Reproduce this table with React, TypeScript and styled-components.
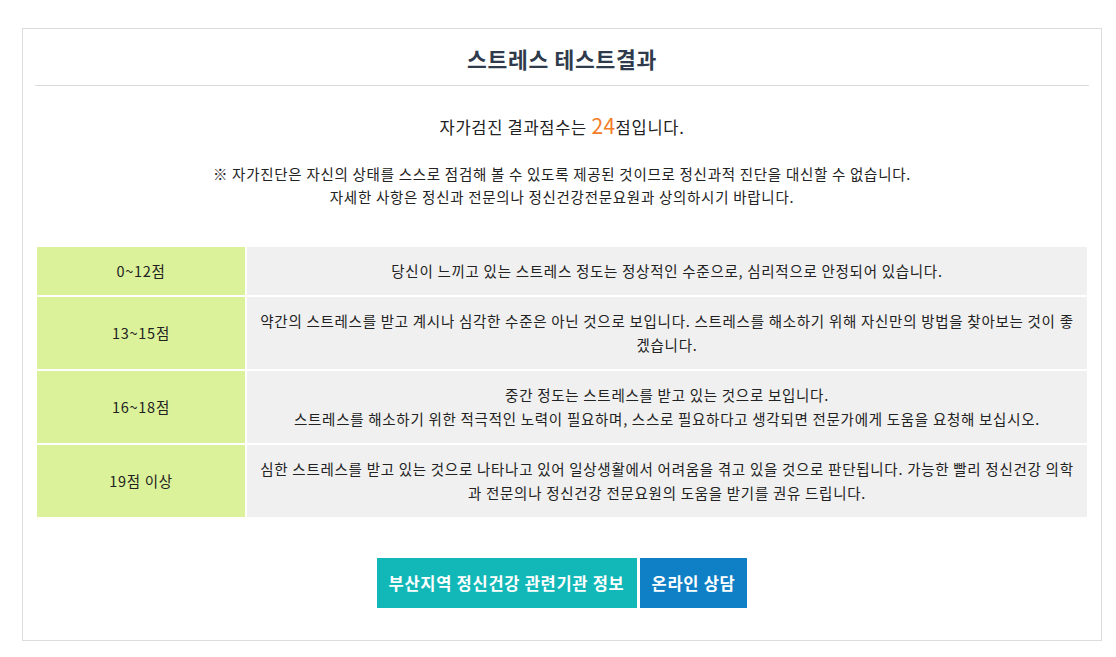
import React from "react";
import styled, { createGlobalStyle } from "styled-components";

const Global = createGlobalStyle`
  html, body { margin: 0; padding: 0; background: #ffffff; }
  body { font-family: "Noto Sans CJK KR", "Noto Sans", sans-serif; color: #333333; letter-spacing: 0.045em; }
  * { box-sizing: border-box; }
`;

const Page = styled.div`
  padding: 28px 14px 16px 22px;
`;

const Box = styled.section`
  width: 1080px;
  border: 1px solid #dcdcdc;
  padding: 0 12px 32px;
`;

const Title = styled.h2`
  margin: 0;
  height: 57px;
  line-height: 60px;
  text-align: center;
  font-size: 21.5px;
  font-weight: 700;
  color: #2f3b4c;
  border-bottom: 1px solid #dcdcdc;
`;

const Score = styled.p`
  margin: 26px 0 0;
  text-align: center;
  font-size: 16.5px;
  line-height: 26px;
  color: #222;
`;

const Num = styled.span`
  font-size: 21px;
  color: #f47c27;
  letter-spacing: 0.02em;
`;

const Notice = styled.p`
  margin: 22px 0 0;
  text-align: center;
  font-size: 14.5px;
  line-height: 23px;
  color: #222;
`;

const Grid = styled.div`
  margin: 39px 2px 0 2px;
  display: grid;
  grid-template-columns: 208px 1fr;
  gap: 2px;
`;

const Range = styled.div`
  background: #dcf29a;
  display: flex;
  align-items: center;
  justify-content: center;
  font-size: 14.5px;
  line-height: 24px;
  color: #222;
  padding: 12px;
`;

const Desc = styled.div`
  background: #f0f0f0;
  display: flex;
  align-items: center;
  justify-content: center;
  text-align: center;
  font-size: 14.5px;
  line-height: 24px;
  color: #222;
  padding: 12px 11px;
`;

const Buttons = styled.div`
  margin-top: 41px;
  display: flex;
  justify-content: center;
  gap: 3px;
`;

const Btn = styled.a<{ $bg: string }>`
  display: inline-flex;
  align-items: center;
  height: 50px;
  padding: 0 12px;
  background: ${(p) => p.$bg};
  color: #ffffff;
  font-size: 16.5px;
  font-weight: 700;
  text-decoration: none;
  cursor: pointer;
`;

const rows: [string, React.ReactNode][] = [
  ["0~12점", "당신이 느끼고 있는 스트레스 정도는 정상적인 수준으로, 심리적으로 안정되어 있습니다."],
  ["13~15점", "약간의 스트레스를 받고 계시나 심각한 수준은 아닌 것으로 보입니다. 스트레스를 해소하기 위해 자신만의 방법을 찾아보는 것이 좋겠습니다."],
  ["16~18점", <>중간 정도는 스트레스를 받고 있는 것으로 보입니다.<br />스트레스를 해소하기 위한 적극적인 노력이 필요하며, 스스로 필요하다고 생각되면 전문가에게 도움을 요청해 보십시오.</>],
  ["19점 이상", "심한 스트레스를 받고 있는 것으로 나타나고 있어 일상생활에서 어려움을 겪고 있을 것으로 판단됩니다. 가능한 빨리 정신건강 의학과 전문의나 정신건강 전문요원의 도움을 받기를 권유 드립니다."],
];

export default function App() {
  return (
    <Page>
      <Global />
      <Box>
        <Title>스트레스 테스트결과</Title>
        <Score>
          자가검진 결과점수는 <Num>24</Num>점입니다.
        </Score>
        <Notice>
          ※ 자가진단은 자신의 상태를 스스로 점검해 볼 수 있도록 제공된 것이므로 정신과적 진단을 대신할 수 없습니다.
          <br />
          자세한 사항은 정신과 전문의나 정신건강전문요원과 상의하시기 바랍니다.
        </Notice>
        <Grid>
          {rows.map(([r, d]) => (
            <React.Fragment key={r}>
              <Range>{r}</Range>
              <Desc>{d}</Desc>
            </React.Fragment>
          ))}
        </Grid>
        <Buttons>
          <Btn $bg="#12b8b8">부산지역 정신건강 관련기관 정보</Btn>
          <Btn $bg="#0f7fc6">온라인 상담</Btn>
        </Buttons>
      </Box>
    </Page>
  );
}
